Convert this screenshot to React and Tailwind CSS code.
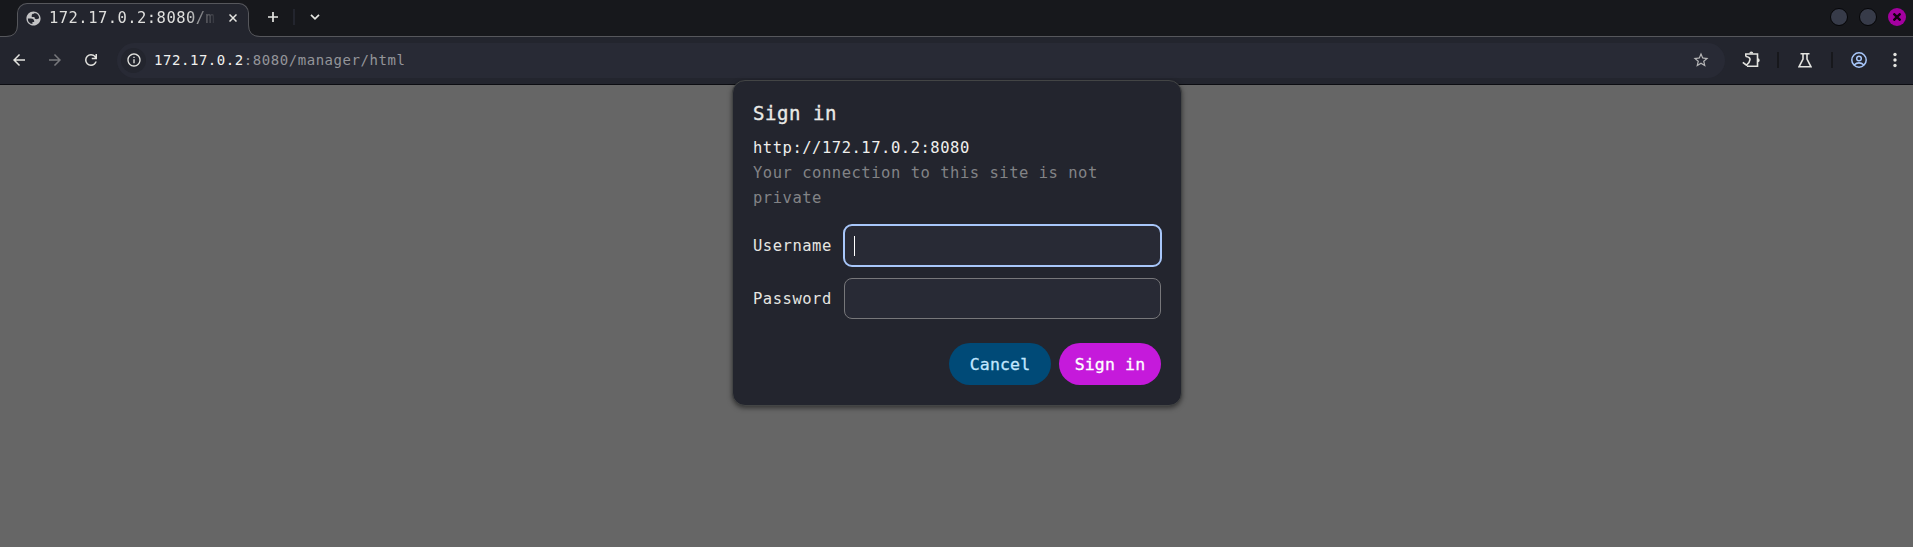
import React from "react";

const MONO = "font-['DejaVu_Sans_Mono','Liberation_Mono',monospace]";

function Icon({ d, size = 20, className = "" }) {
  return (
    <svg width={size} height={size} viewBox="0 0 24 24" fill="currentColor" className={`shrink-0 ${className}`}>
      <path d={d} />
    </svg>
  );
}

const BACK = "M20 11H7.83l5.59-5.59L12 4l-8 8 8 8 1.41-1.41L7.83 13H20v-2z";
const FORWARD = "M12 4l-1.41 1.41L16.17 11H4v2h12.17l-5.58 5.59L12 20l8-8z";
const RELOAD = "M12 20q-3.35 0-5.675-2.325T4 12t2.325-5.675T12 4q1.725 0 3.3.713T18 6.75V4h2v7h-7V9h4.2q-.8-1.4-2.187-2.2T12 6Q9.5 6 7.75 7.75T6 12t1.75 4.25T12 18q1.925 0 3.475-1.1T17.65 14h2.1q-.7 2.65-2.85 4.325T12 20";
const INFO = "M11 17h2v-6h-2v6zm1-15C6.48 2 2 6.48 2 12s4.48 10 10 10 10-4.48 10-10S17.52 2 12 2zm0 18c-4.41 0-8-3.59-8-8s3.59-8 8-8 8 3.59 8 8-3.59 8-8 8zM11 9h2V7h-2v2z";
const STAR = "M22 9.24l-7.19-.62L12 2 9.19 8.63 2 9.24l5.46 4.73L5.82 21 12 17.27 18.18 21l-1.63-7.03L22 9.24zM12 15.4l-3.76 2.27 1-4.28-3.32-2.88 4.38-.38L12 6.1l1.71 4.04 4.38.38-3.32 2.88 1 4.28L12 15.4z";
const GLOBE = "M12 2C6.48 2 2 6.48 2 12s4.48 10 10 10 10-4.48 10-10S17.52 2 12 2zM4 12h4.4c3.4.02 4.9 1.73 4.6 5.1h-2.5v2.75A8 8 0 0 1 4 12zm16 0c0-.4-.03-.7-.07-1-.6 1.4-1.7 2-3.4 2-2.1 0-3.2-1.1-3.2-3.1H9.5V7.7c0-1.6.9-2.4 2.6-2.4h1V4.1A8 8 0 0 1 20 12z";

function Tab() {
  return (
    <div className="relative ml-[17px] mt-[3px] flex h-[34px] w-[232px] items-center rounded-t-[10px] border-x border-t border-[#56575c] bg-[#23252e] pl-[7px] pb-[5px]">
      <svg className="absolute -left-[12px] bottom-0" width="12" height="12" viewBox="0 0 12 12">
        <path d="M0 12v-.5Q11.5 11.5 11.5 0H13v12z" fill="#23252e" />
        <path d="M0 11.5Q11.5 11.5 11.5 0" fill="none" stroke="#56575c" />
      </svg>
      <svg className="absolute -right-[12px] bottom-0" width="12" height="12" viewBox="0 0 12 12">
        <path d="M12 12v-.5Q.5 11.5 .5 0H0v12z" fill="#23252e" />
        <path d="M12 11.5Q.5 11.5 .5 0" fill="none" stroke="#56575c" />
      </svg>
      <Icon d={GLOBE} size={17} className="text-[#c3c3c5]" />
      <div className={`${MONO} ml-[7px] w-[168px] overflow-hidden whitespace-nowrap text-[15.5px] leading-[22px] tracking-[0.45px] text-[#dfdfdd] [mask-image:linear-gradient(to_right,#000_82%,transparent_100%)]`}>
        172.17.0.2:8080/m
      </div>
      <svg width="8" height="8" viewBox="0 0 8 8" className="ml-[12px] shrink-0" stroke="#e6e6e2" strokeWidth="1.5">
        <path d="M.5 .5l7 7M7.5 .5l-7 7" />
      </svg>
    </div>
  );
}

function TitleBar() {
  return (
    <div className="flex h-[37px] justify-between bg-[#17181c] shadow-[inset_0_-1px_0_#56575c]">
      <div className="flex">
        <Tab />
        <div className="flex h-[34px] items-center text-[#e6e6e2]">
          <svg width="10" height="10" viewBox="0 0 10 10" className="ml-[19px]" stroke="currentColor" strokeWidth="1.7">
            <path d="M5 0v10M0 5h10" />
          </svg>
          <div className="ml-[15px] h-4 w-[2px] bg-[#23252e]" />
          <svg width="10" height="6" viewBox="0 0 10 6" className="ml-[15px]" fill="none" stroke="currentColor" strokeWidth="1.7">
            <path d="M1 .8l4 4 4-4" />
          </svg>
        </div>
      </div>
      <div className="flex h-[34px] items-center gap-[11px] pr-[7px]">
        <div className="size-[18px] rounded-full border border-[#050507] bg-[#373b49]" />
        <div className="size-[18px] rounded-full border border-[#050507] bg-[#373b49]" />
        <div className="flex size-[18px] items-center justify-center rounded-full bg-[#a3009f]">
          <svg width="8" height="8" viewBox="0 0 8 8" stroke="#100010" strokeWidth="2.4">
            <path d="M.5 .5l7 7M7.5 .5l-7 7" />
          </svg>
        </div>
      </div>
    </div>
  );
}

function Toolbar() {
  return (
    <div className="flex h-12 items-center border-b border-[#0c0d12] bg-[#23252e] pb-px text-[#e3e3df]">
      <Icon d={BACK} size={18} className="ml-[10px]" />
      <Icon d={FORWARD} size={18} className="ml-[18px] text-[#77787c]" />
      <Icon d={RELOAD} size={18} className="ml-[18px]" />
      <div className="ml-[17px] flex h-[35px] w-[1608px] shrink-0 items-center rounded-full bg-[#282a35] pl-[4px]">
        <div className="flex size-[25px] items-center justify-center rounded-full bg-[#23252e]">
          <Icon d={INFO} size={16} />
        </div>
        <div className={`${MONO} ml-[8px] whitespace-nowrap text-[14px] leading-5 tracking-[0.55px] text-[#94959a]`}>
          <span className="text-[#f1f1ef]">172.17.0.2</span>:8080/manager/html
        </div>
        <Icon d={STAR} size={18} className="ml-auto mr-[15px] text-[#b7b7b8]" />
      </div>
      <svg width="19" height="20" viewBox="0 0 19 20" className="ml-[17px] shrink-0" fill="none" stroke="currentColor" strokeWidth="1.6">
        <path d="M3.800 6.500V4H15.500V16.200H5M3.800 6.500Q8 6.800 8 9.600Q7.500 13 4.500 15.200L.8 12.300" />
        <path d="M7.300 3.600a2 2 0 0 1 4 0zM15.700 8.300a2 2 0 0 1 0 4z" fill="currentColor" stroke="none" />
      </svg>
      <div className="ml-[16px] h-4 w-[2px] shrink-0 bg-[#17181c]" />
      <svg width="14" height="15" viewBox="0 0 14 15" className="ml-[19px] shrink-0" fill="none" stroke="currentColor" strokeWidth="1.6">
        <path d="M2.500 .8h9M5 1v5L1 13.800h12L9 6V1" />
      </svg>
      <div className="ml-[19px] h-4 w-[2px] shrink-0 bg-[#17181c]" />
      <svg width="16" height="16" viewBox="0 0 16 16" className="ml-[18px] shrink-0 text-[#a8c7fa]" fill="none" stroke="currentColor" strokeWidth="1.5">
        <circle cx="8" cy="8" r="7.200" />
        <circle cx="8" cy="6.500" r="2.300" />
        <path d="M3 13q5-4.200 10 0" />
      </svg>
      <svg width="4" height="16" viewBox="0 0 4 16" className="ml-[26px] shrink-0" fill="currentColor">
        <circle cx="2" cy="2.500" r="1.700" />
        <circle cx="2" cy="8" r="1.700" />
        <circle cx="2" cy="13.500" r="1.700" />
      </svg>
    </div>
  );
}

function Field({ label, focused }) {
  return (
    <div className="flex items-center">
      <label className="w-[90px] pt-[2px] text-[#e6e6e2]">{label}</label>
      {focused ? (
        <div className="flex h-[43px] w-[319px] items-center rounded-[9px] border-2 border-[#a8c7fa] bg-[#282a35] pl-[9px]">
          <div className="h-5 w-px bg-white" />
        </div>
      ) : (
        <div className="ml-px h-[41px] w-[317px] rounded-[8px] border border-[#77777a] bg-[#282a35]" />
      )}
    </div>
  );
}

function SignInDialog() {
  return (
    <div className={`${MONO} absolute left-[732px] top-[80px] flex h-[326px] w-[450px] flex-col rounded-[13px] border border-[#434545] bg-[#23252e] px-[20px] pt-[18px] text-[15.5px] leading-[25px] tracking-[0.52px] shadow-[0_2px_5px_rgba(0,0,0,0.5)]`}>
      <h1 className="text-[19px] leading-7 tracking-[0.56px] text-[#e9e9e6] [-webkit-text-stroke:0.35px_#e9e9e6]">Sign in</h1>
      <p className="mt-[9px] text-[#efefed]">http://172.17.0.2:8080</p>
      <p className="text-[#828386]">Your connection to this site is not private</p>
      <div className="mt-[13px] -mr-px"><Field label="Username" focused /></div>
      <div className="mt-[11px]"><Field label="Password" /></div>
      <div className="mt-[24px] flex justify-end gap-2 text-[16.500px] tracking-[0.15px]">
        <button className="h-[42px] w-[102px] rounded-full bg-[#004a77] text-[#c2e7ff] [-webkit-text-stroke:0.3px_#c2e7ff]">Cancel</button>
        <button className="h-[42px] w-[102px] rounded-full bg-[#c51adb] text-white [-webkit-text-stroke:0.3px_white]">Sign in</button>
      </div>
    </div>
  );
}

export default function App() {
  return (
    <div className="relative h-[547px] w-[1913px] overflow-hidden bg-[#666]">
      <TitleBar />
      <Toolbar />
      <SignInDialog />
    </div>
  );
}
